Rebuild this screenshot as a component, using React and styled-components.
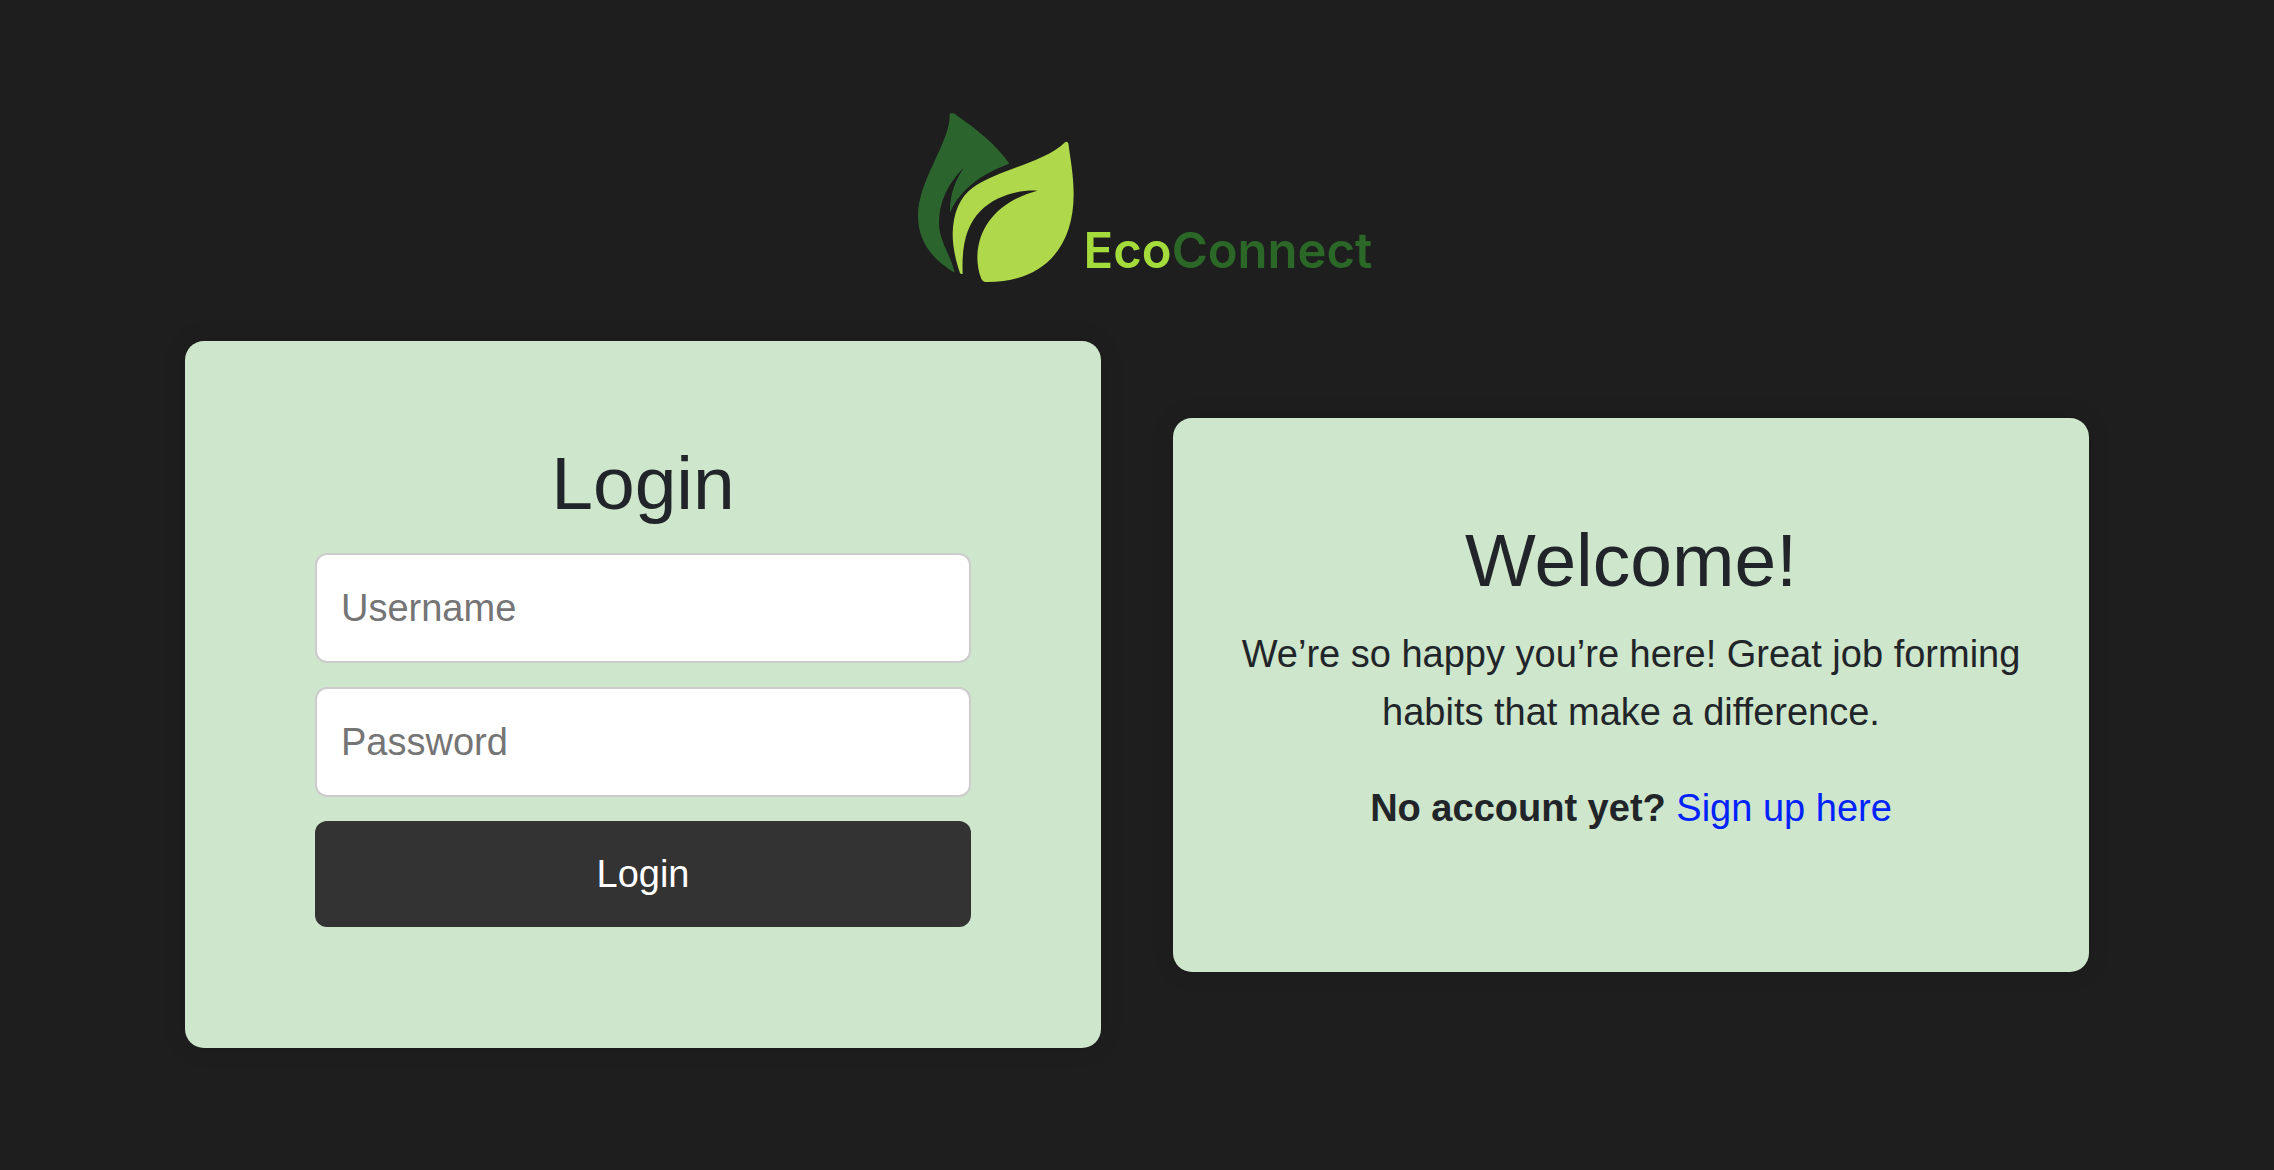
import { useState } from "react";
import styled, { createGlobalStyle } from "styled-components";

const GlobalStyle = createGlobalStyle`
  * {
    box-sizing: border-box;
  }
  body {
    margin: 0;
    background-color: #1e1e1e;
    color: #212529;
    font-family: Arial, "Liberation Sans", sans-serif;
    font-size: 38px;
    line-height: 58px;
  }
`;

const Page = styled.main`
  min-height: 100vh;
  padding: 112px 185px;
`;

const Logo = styled.header`
  display: flex;
  justify-content: center;
  align-items: flex-end;
  gap: 8px;
  margin-bottom: 57px;
  padding-left: 14px;
`;

const LogoName = styled.span`
  font-family: Inter, sans-serif;
  font-size: 49px;
  font-weight: 600;
  color: ${(props) => props.$color};
`;

const Columns = styled.div`
  display: flex;
  align-items: center;
  gap: 72px;
`;

const Card = styled.section`
  flex: 1;
  min-width: 0;
  padding: 96px 48px 97px;
  background-color: #cee6cb;
  border-radius: 19px;
  box-shadow: 0 0 24px rgba(0, 0, 0, 0.1);
  text-align: center;
`;

const Title = styled.h1`
  margin: 0 0 ${(props) => props.$gap};
  font-size: 75px;
  font-weight: 400;
  line-height: 92px;
`;

const Form = styled.form`
  display: flex;
  flex-direction: column;
  gap: 24px;
  width: 80%;
  margin: 0 auto 24px;
`;

const Input = styled.input`
  width: 100%;
  height: 110px;
  padding: 24px;
  border: 2px solid #ccc;
  border-radius: 12px;
  background-color: #fff;
  color: #212529;
  font: inherit;

  &::placeholder {
    color: #757575;
  }
`;

const Button = styled.button`
  padding: 24px;
  border: none;
  border-radius: 12px;
  background-color: #333;
  color: #fff;
  font: inherit;
  cursor: pointer;
`;

const Text = styled.p`
  margin: 0 0 38px;
`;

const Link = styled.a`
  color: #0022ff;
  text-decoration: none;
`;

const Leaves = () => (
  <svg width="160" height="172" viewBox="48 36 480 516" aria-hidden="true">
    <path
      fill="#2b652d"
      d="M149 42Q149 40 152 40L160 40Q164 41 168 45C228 86 286 132 327 189Q327 191 324 193C250 221 184 262 150 338C148 286 166 242 191 203C143 252 116 306 117 372C118 424 152 464 164 518C98 480 54 424 54 348C54 238 153 124 149 42Z"
    />
    <path
      fill="#b0d84b"
      d="M496 126Q502 123 505 130C511 176 521 226 521 282C521 444 430 546 262 546Q249 547 244 536C236 518 232 494 232 472C234 370 306 300 412 272C346 269 283 292 242 332C196 378 185 444 188 521Q183 524 180 519C166 478 158 440 158 400C160 340 178 292 220 262C300 206 430 190 496 126Z"
    />
  </svg>
);

const LoginForm = () => {
  const [username, setUsername] = useState("");
  const [password, setPassword] = useState("");

  return (
    <Form onSubmit={(e) => e.preventDefault()}>
      <Input
        type="text"
        placeholder="Username"
        aria-label="Username"
        value={username}
        onChange={(e) => setUsername(e.target.value)}
      />
      <Input
        type="password"
        placeholder="Password"
        aria-label="Password"
        value={password}
        onChange={(e) => setPassword(e.target.value)}
      />
      <Button type="submit">Login</Button>
    </Form>
  );
};

const App = () => {
  return (
    <>
      <GlobalStyle />
      <Page>
        <Logo>
          <Leaves />
          <div>
            <LogoName $color="#a4dc3c">Eco</LogoName>
            <LogoName $color="#2b6827">Connect</LogoName>
          </div>
        </Logo>
        <Columns>
          <Card>
            <Title $gap="24px">Login</Title>
            <LoginForm />
          </Card>
          <Card>
            <Title $gap="19px">Welcome!</Title>
            <Text>
              We’re so happy you’re here! Great job forming habits that make a
              difference.
            </Text>
            <Text>
              <strong>No account yet?</strong> <Link href="#">Sign up here</Link>
            </Text>
          </Card>
        </Columns>
      </Page>
    </>
  );
};

export default App;
